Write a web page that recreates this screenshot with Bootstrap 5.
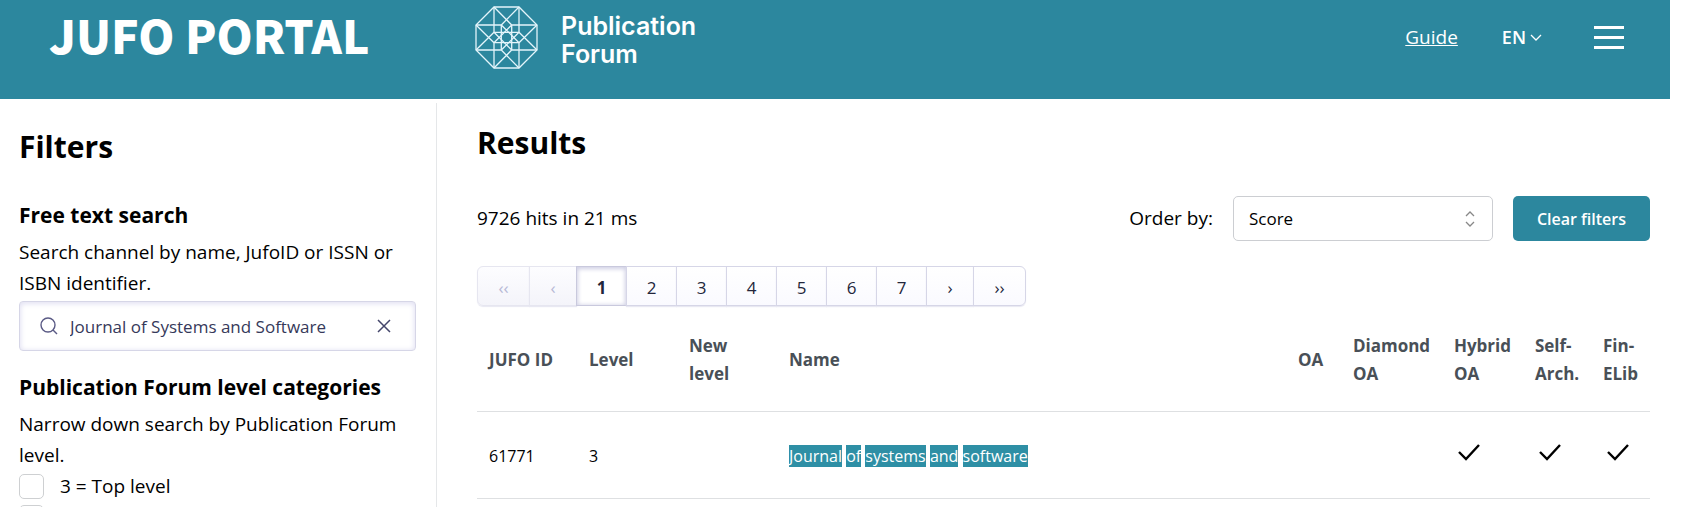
<!DOCTYPE html>
<html lang="en">
<head>
<meta charset="utf-8">
<meta name="viewport" content="width=device-width, initial-scale=1">
<title>JUFO Portal</title>
<link href="https://cdn.jsdelivr.net/npm/bootstrap@5.3.0/dist/css/bootstrap.min.css" rel="stylesheet">
<style>
:root { --teal: #2c879e; --line: #dee0e2; --violet: #d6d6e7; }
body { font-family: "Open Sans", "Noto Sans", sans-serif; font-size: 19px; line-height: 31px; color: #000; background: #fff; }
.shell { height: 100vh; padding-right: 17px; }
.topbar { background: var(--teal); color: #fff; height: 99px; padding: 0 46px 24px 49px; }
.brand { font-family: "Noto Sans CJK JP", "Open Sans", sans-serif; font-size: 46px; line-height: 48px; font-weight: 900; color: #fff; width: 426px; padding-bottom: 8px; }
.forum { font-family: Inter, sans-serif; font-size: 25px; line-height: 28px; font-weight: 600; color: #fff; gap: 23px; }
.topnav { gap: 44px; }
.lang { font-size: 18px; font-weight: 600; }
.sidebar { width: 437px; padding: 24px 20px 0 19px; margin-top: 4px; border-right: 1px solid #e5e7e9; }
.results { padding: 24px 20px 0 40px; }
h1 { font-size: 30px; line-height: 40px; font-weight: 700; margin: 0; }
h2 { font-size: 21px; line-height: 32px; font-weight: 700; margin: 20px 0 6px; }
h1 + h2 { margin-top: 32px; }
.searchbox { height: 50px; margin-top: 2px; border: 1px solid var(--violet); border-radius: 4px; box-shadow: inset 0 1px 5px 1px #e3e2f3; padding: 0 24px 0 20px; color: #5a5a85; }
.searchbox input { font-size: 17px; color: #36395a; min-width: 0; }
.form-check-input.level-box { width: 25px; height: 25px; margin: 3px 0; border: 1px solid #ced0d2; border-radius: 5px; }
.toolrow { gap: 20px; margin: 33px 0 25px; }
.order-select { width: 260px; height: 45px; border: 1px solid #ccced2; border-radius: 5px; font-size: 17px; color: #000; padding: 0 15px;
  background-image: url("data:image/svg+xml,%3Csvg xmlns='http://www.w3.org/2000/svg' viewBox='0 0 10 16' fill='none' stroke='%23888' stroke-width='1.3'%3E%3Cpath d='M1 5l4-4 4 4M1 11l4 4 4-4'/%3E%3C/svg%3E"); background-size: 10px 16px; background-position: right 17px center; }
.btn-teal, .btn-teal:hover { background: var(--teal); color: #fff; font-size: 16px; font-weight: 600; height: 45px; width: 137px; border-radius: 5px; padding: 0; }
.page-link { width: 51px; height: 40px; padding: 0; line-height: 41px; text-align: center; font-size: 17px; background: linear-gradient(#fff, #fafaff); color: #23263b; border-color: var(--violet); box-shadow: 0 1px 1px #e8e8f2; }
.page-link.edge { width: 53px; }
.page-link.step { width: 48px; }
.page-link.off { background: linear-gradient(#fdfdff, #f4f4fa); color: #b6b7d5; border-color: #e6e6f0; }
.page-link.now { font-weight: 700; background: #fff; border-color: #c9c9dd; box-shadow: inset 0 1px 4px 1px #cfcfe4; }
.hits { font-size: 16px; line-height: 28px; table-layout: fixed; margin: 0; }
.hits th { font-size: 17px; color: #495057; font-weight: 700; vertical-align: middle; padding: 22px 12px 23px; }
.hits td { padding: 30px 12px 28px; color: #000; vertical-align: middle; }
.hits > :not(caption) > * > * { border-bottom: 1px solid var(--line); }
.hits mark { background: #2e8fa5; color: #fff; padding: 0; }
.hits svg { display: block; margin: 0 0 8px 4px; }
</style>
</head>
<body>
<div class="shell d-flex flex-column overflow-hidden">
  <header class="topbar d-flex align-items-center flex-shrink-0">
    <a class="brand text-decoration-none text-nowrap" href="#">JUFO PORTAL</a>
    <a class="forum d-flex align-items-center text-decoration-none" href="#">
      <svg width="63" height="63" viewBox="0 0 63 63" fill="none" stroke="#e4f5fb" stroke-width="1.3" aria-hidden="true">
        <path d="M19 1H44L62 19V44L44 62H19L1 44V19Z"/>
        <path d="M1 19H26.3M62 19H36.7M1 44H26.3M62 44H36.7M19 26.3H44M19 36.7H44"/>
        <path d="M19 1V26.3M19 62V36.7M44 1V26.3M44 62V36.7M26.3 19V44M36.7 19V44"/>
        <path d="M1 19L19 36.7M1 44L19 26.3M19 1L36.7 19M44 1L26.3 19M62 19L44 36.7M62 44L44 26.3M19 62L36.7 44M44 62L26.3 44"/>
        <path d="M26.3 19L44 36.7M36.7 19L19 36.7M26.3 44L44 26.3M36.7 44L19 26.3"/>
      </svg>
      <span class="pt-1">Publication<br>Forum</span>
    </a>
    <nav class="topnav d-flex align-items-center ms-auto">
      <a class="text-white" href="#">Guide</a>
      <button class="lang btn p-0 border-0 text-white d-flex align-items-center gap-1 me-2" type="button">EN
        <svg width="12" height="8" viewBox="0 0 12 8" fill="none" stroke="#fff" stroke-width="1.3" aria-hidden="true"><path d="M1 1l5 5 5-5"/></svg>
      </button>
      <button class="btn p-0 border-0 d-flex" type="button" aria-label="Menu">
        <svg width="30" height="23" viewBox="0 0 30 23" fill="#fff" aria-hidden="true"><path d="M0 0h30v3H0zM0 10h30v3H0zM0 20h30v3H0z"/></svg>
      </button>
    </nav>
  </header>

  <div class="d-flex flex-grow-1">
    <aside class="sidebar flex-shrink-0">
      <h1>Filters</h1>
      <h2>Free text search</h2>
      <label for="q">Search channel by name, JufoID or ISSN or ISBN identifier.</label>
      <div class="searchbox d-flex align-items-center">
        <svg width="18" height="18" viewBox="0 0 18 18" fill="none" stroke="currentColor" stroke-width="1.4" aria-hidden="true"><circle cx="8" cy="8" r="7"/><path d="M13 13l4 4"/></svg>
        <input id="q" class="border-0 bg-transparent flex-grow-1 p-0 ms-2 ps-1" type="text" value="Journal of Systems and Software">
        <button class="btn p-0 border-0 d-flex" type="button" aria-label="Clear">
          <svg width="14" height="14" viewBox="0 0 14 14" fill="none" stroke="#44466b" stroke-width="1.5" aria-hidden="true"><path d="M1 1l12 12M13 1L1 13"/></svg>
        </button>
      </div>
      <h2>Publication Forum level categories</h2>
      <div>Narrow down search by Publication Forum level.</div>
      <div class="d-flex align-items-center">
        <input class="form-check-input level-box" type="checkbox" id="lv3">
        <label class="ms-3" for="lv3">3 = Top level</label>
      </div>
      <div class="d-flex align-items-center">
        <input class="form-check-input level-box" type="checkbox" aria-label="Level 2">
      </div>
    </aside>

    <main class="results flex-grow-1">
      <h1>Results</h1>
      <div class="toolrow d-flex align-items-center">
        <span>9726 hits in 21 ms</span>
        <label class="ms-auto" for="order">Order by:</label>
        <select id="order" class="form-select order-select"><option>Score</option><option>Name</option></select>
        <button class="btn btn-teal" type="button">Clear filters</button>
      </div>
      <nav aria-label="Result pages">
        <ul class="pagination mb-0">
          <li class="page-item"><a class="page-link edge off" href="#">‹‹</a></li>
          <li class="page-item"><a class="page-link step off" href="#">‹</a></li>
          <li class="page-item"><a class="page-link now" href="#">1</a></li>
          <li class="page-item"><a class="page-link" href="#">2</a></li>
          <li class="page-item"><a class="page-link" href="#">3</a></li>
          <li class="page-item"><a class="page-link" href="#">4</a></li>
          <li class="page-item"><a class="page-link" href="#">5</a></li>
          <li class="page-item"><a class="page-link" href="#">6</a></li>
          <li class="page-item"><a class="page-link" href="#">7</a></li>
          <li class="page-item"><a class="page-link step" href="#">›</a></li>
          <li class="page-item"><a class="page-link edge" href="#">››</a></li>
        </ul>
      </nav>
      <table class="table hits mt-1">
        <colgroup><col style="width:100px"><col style="width:100px"><col style="width:100px"><col><col style="width:55px"><col style="width:101px"><col style="width:81px"><col style="width:68px"><col style="width:59px"></colgroup>
        <thead><tr><th>JUFO ID</th><th>Level</th><th>New<br>level</th><th>Name</th><th>OA</th><th>Diamond<br>OA</th><th>Hybrid<br>OA</th><th>Self-<br>Arch.</th><th>Fin-<br>ELib</th></tr></thead>
        <tbody><tr>
          <td>61771</td><td>3</td><td></td>
          <td><mark>Journal</mark> <mark>of</mark> <mark>systems</mark> <mark>and</mark> <mark>software</mark></td>
          <td></td><td></td>
          <td><svg width="22" height="17" viewBox="0 0 22 17" fill="none" stroke="#000" stroke-width="2.4" role="img" aria-label="Yes"><path d="M1 8l7 7L21 1"/></svg></td>
          <td><svg width="22" height="17" viewBox="0 0 22 17" fill="none" stroke="#000" stroke-width="2.4" role="img" aria-label="Yes"><path d="M1 8l7 7L21 1"/></svg></td>
          <td><svg width="22" height="17" viewBox="0 0 22 17" fill="none" stroke="#000" stroke-width="2.4" role="img" aria-label="Yes"><path d="M1 8l7 7L21 1"/></svg></td>
        </tr></tbody>
      </table>
    </main>
  </div>
</div>
<script src="https://cdn.jsdelivr.net/npm/bootstrap@5.3.0/dist/js/bootstrap.bundle.min.js"></script>
</body>
</html>
